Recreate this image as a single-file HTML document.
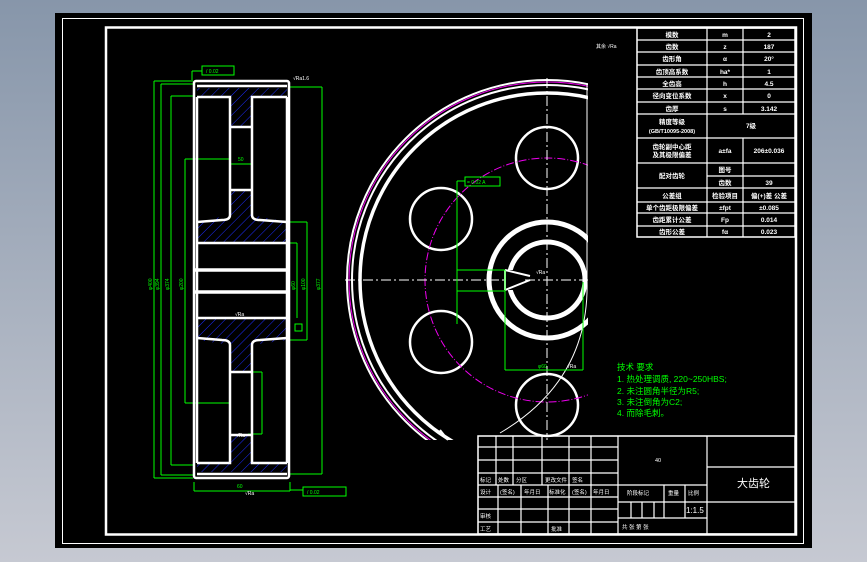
<!DOCTYPE html>
<html><head><meta charset="utf-8"><style>
html,body{margin:0;padding:0;width:867px;height:562px;overflow:hidden;background:linear-gradient(#8796aa,#c6c9d2);}
svg{position:absolute;left:0;top:0}
text{font-family:"Liberation Sans","Noto Sans CJK SC",sans-serif;}
</style></head><body>
<svg width="867" height="562" viewBox="0 0 867 562">
<defs>
<pattern id="h" width="7" height="7" patternUnits="userSpaceOnUse" patternTransform="rotate(45)">
<line x1="0" y1="0" x2="0" y2="7" stroke="#1d2cff" stroke-width="1"/></pattern>
<clipPath id="cv"><rect x="340" y="60" width="248" height="380"/></clipPath>
</defs>
<rect x="55" y="13" width="757" height="535" fill="#000"/>
<rect x="62.5" y="18.5" width="741" height="525" fill="none" stroke="#fff" stroke-width="1"/>
<rect x="106" y="27.5" width="690" height="507" fill="none" stroke="#fff" stroke-width="2.5"/>

<!-- section view -->
<g stroke="#0f0" stroke-width="1" fill="none">
<line x1="154" y1="81" x2="154" y2="478"/><line x1="154" y1="81" x2="193" y2="81"/><line x1="154" y1="478" x2="193" y2="478"/>
<line x1="161" y1="84" x2="161" y2="475"/><line x1="161" y1="84" x2="193" y2="84"/><line x1="161" y1="475" x2="193" y2="475"/>
<line x1="171" y1="96" x2="171" y2="465"/><line x1="171" y1="96" x2="193" y2="96"/><line x1="171" y1="465" x2="193" y2="465"/>
<line x1="185" y1="159" x2="185" y2="403"/><line x1="185" y1="159" x2="230" y2="159"/><line x1="185" y1="403" x2="230" y2="403"/>
<line x1="322" y1="87" x2="322" y2="474"/><line x1="290" y1="87" x2="322" y2="87"/><line x1="290" y1="474" x2="322" y2="474"/>
<line x1="307" y1="222" x2="307" y2="340"/><line x1="290" y1="222" x2="307" y2="222"/><line x1="290" y1="340" x2="307" y2="340"/>
<line x1="297" y1="243" x2="297" y2="318"/><line x1="290" y1="243" x2="297" y2="243"/>
<line x1="262" y1="372" x2="262" y2="434"/><line x1="248" y1="372" x2="262" y2="372"/><line x1="248" y1="434" x2="262" y2="434"/>
<line x1="194" y1="482" x2="194" y2="491"/><line x1="194" y1="491" x2="290" y2="491"/><line x1="290" y1="482" x2="290" y2="491"/>
<line x1="192" y1="71" x2="192" y2="80"/><line x1="192" y1="71" x2="202" y2="71"/>
<rect x="202" y="66" width="32" height="9"/><rect x="303" y="487" width="43" height="9"/>
<line x1="290" y1="490" x2="303" y2="490"/>
<rect x="295" y="324" width="7" height="7"/>
<line x1="230" y1="164" x2="253" y2="164"/>
</g>
<g fill="#0f0" font-size="5">
<text x="206" y="73">/ 0.02</text><text x="307" y="494">/ 0.02</text>
<text x="238" y="161">50</text><text x="237" y="488">60</text>
<text transform="translate(152,290) rotate(-90)">φ400</text>
<text transform="translate(159,290) rotate(-90)">φ394</text>
<text transform="translate(169,290) rotate(-90)">φ374</text>
<text transform="translate(183,290) rotate(-90)">φ200</text>
<text transform="translate(305,290) rotate(-90)">φ100</text>
<text transform="translate(320,290) rotate(-90)">φ377</text>
<text transform="translate(295,290) rotate(-90)">φ60</text>
</g>
<g fill="url(#h)" stroke="none">
<rect x="197" y="88" width="90" height="9"/>
<rect x="197" y="463" width="90" height="9"/>
<path d="M230 97 L252 97 L252 127 L230 127 Z"/>
<path d="M230 190 L252 190 L252 215 L287 222 L287 243 L197 243 L197 222 L230 215 Z"/>
<path d="M197 318 L287 318 L287 340 L252 345 L252 372 L230 372 L230 345 L197 340 Z"/>
<path d="M230 435 L252 435 L252 463 L230 463 Z"/>
</g>
<g stroke="#fff" stroke-width="2.5" fill="none">
<rect x="194" y="81" width="95" height="397" rx="2"/>
<line x1="197" y1="86" x2="287" y2="86"/><line x1="197" y1="474" x2="287" y2="474"/>
<path d="M197 97 L230 97 Q230 103 230 110 L230 215 Q230 220 222 220 L197 222"/>
<path d="M287 97 L252 97 L252 215 Q252 220 260 220 L287 222"/>
<path d="M197 463 L230 463 L230 345 Q230 340 222 340 L197 338"/>
<path d="M287 463 L252 463 L252 345 Q252 340 260 340 L287 338"/>
<line x1="231" y1="127" x2="251" y2="127"/><line x1="231" y1="190" x2="251" y2="190"/>
<line x1="231" y1="372" x2="251" y2="372"/><line x1="231" y1="435" x2="251" y2="435"/>
<line x1="197" y1="243" x2="287" y2="243"/><line x1="197" y1="318" x2="287" y2="318"/>
<line x1="195" y1="270" x2="288" y2="270" stroke-width="3.5"/><line x1="195" y1="292" x2="288" y2="292" stroke-width="3.5"/>
<line x1="197" y1="97" x2="197" y2="463"/><line x1="287" y1="97" x2="287" y2="463"/>
</g>
<g fill="#fff" font-size="5"><text x="293" y="80">√Ra1.6</text><text x="235" y="316">√Ra</text><text x="245" y="495">√Ra</text><text x="236" y="437">√Ra</text></g>

<!-- circle view -->
<g clip-path="url(#cv)">
<g fill="none" stroke="#fff">
<circle cx="547" cy="280" r="200" stroke-width="2"/>
<circle cx="547" cy="280" r="195" stroke-width="2"/>
<circle cx="547" cy="280" r="187" stroke-width="3.5"/>
<circle cx="547" cy="158" r="31" stroke-width="2.5"/>
<circle cx="441" cy="219" r="31" stroke-width="2.5"/>
<circle cx="441" cy="342" r="31" stroke-width="2.5"/>
<circle cx="547" cy="405" r="31" stroke-width="2.5"/>
<circle cx="547" cy="280" r="58" stroke-width="5"/>
<circle cx="547" cy="280" r="38" stroke-width="5"/>
</g>
<circle cx="547" cy="280" r="198" fill="none" stroke="#e0e" stroke-width="1"/>
<circle cx="547" cy="280" r="122" fill="none" stroke="#e0e" stroke-width="1" stroke-dasharray="8 2 1 2"/>
<g stroke="#fff" stroke-width="1" stroke-dasharray="10 3 2 3"><line x1="345" y1="280" x2="590" y2="280"/><line x1="547" y1="78" x2="547" y2="440"/></g>
<line x1="587" y1="83" x2="587" y2="280" stroke="#fff" stroke-width="1"/>
<path d="M587 280 Q590 380 500 433" fill="none" stroke="#fff" stroke-width="1"/>
<rect x="505" y="270" width="20" height="20" fill="#000"/>
<path d="M505 270 L530 276 M505 290 L530 280 M505 270 L505 290" stroke="#fff" stroke-width="2" fill="none"/>
</g>
<path d="M440 430 L448 440" stroke="#fff" stroke-width="2"/>
<g stroke="#0f0" fill="none" stroke-width="1">
<line x1="457" y1="181" x2="457" y2="324"/><line x1="457" y1="181" x2="465" y2="181"/>
<rect x="465" y="177" width="35" height="9"/>
<line x1="457" y1="270" x2="505" y2="270"/><line x1="457" y1="291" x2="505" y2="291"/>
<line x1="505" y1="270" x2="505" y2="370"/><line x1="505" y1="370" x2="583" y2="370"/><line x1="583" y1="282" x2="583" y2="370"/>
</g>
<g fill="#0f0" font-size="5"><text x="467" y="184">= 0.02 A</text><text x="538" y="368">φ60</text></g>
<g fill="#fff" font-size="5"><text x="536" y="274">√Ra</text><text x="567" y="368">√Ra</text><text x="596" y="48">其余 √Ra</text></g>

<!-- technical requirements -->
<g fill="#0f0" font-size="8.5">
<text x="617" y="370">技术 要求</text>
<text x="617" y="382">1. 热处理调质, 220~250HBS;</text>
<text x="617" y="394">2. 未注圆角半径为R5;</text>
<text x="617" y="405">3. 未注倒角为C2;</text>
<text x="617" y="416">4. 而除毛刺。</text>
</g>

<!-- parameter table -->
<g stroke="#fff" stroke-width="1.2" fill="none">
<rect x="637" y="28" width="158" height="209" stroke-width="1.5"/>
<line x1="707" y1="28" x2="707" y2="237"/><line x1="743" y1="28" x2="743" y2="114"/><line x1="743" y1="138" x2="743" y2="237"/>
<path d="M637 40H795M637 52H795M637 65H795M637 77H795M637 89H795M637 102H795M637 114H795M637 138H795M637 163H795M707 176H795M637 188H795M637 202H795M637 213H795M637 226H795"/>
</g>
<g fill="#fff" font-size="6.5" text-anchor="middle" font-weight="bold">
<text x="672" y="37">模数</text><text x="725" y="37">m</text><text x="769" y="37">2</text>
<text x="672" y="49">齿数</text><text x="725" y="49">z</text><text x="769" y="49">187</text>
<text x="672" y="61">齿形角</text><text x="725" y="61">α</text><text x="769" y="61">20°</text>
<text x="672" y="74">齿顶高系数</text><text x="725" y="74">ha*</text><text x="769" y="74">1</text>
<text x="672" y="86">全齿高</text><text x="725" y="86">h</text><text x="769" y="86">4.5</text>
<text x="672" y="98">径向变位系数</text><text x="725" y="98">x</text><text x="769" y="98">0</text>
<text x="672" y="111">齿厚</text><text x="725" y="111">s</text><text x="769" y="111">3.142</text>
<text x="672" y="124">精度等级</text><text x="672" y="133" font-size="5.5">(GB/T10095-2008)</text><text x="751" y="128">7级</text>
<text x="672" y="149">齿轮副中心距</text><text x="672" y="157">及其极限偏差</text><text x="725" y="153">a±fa</text><text x="769" y="153">206±0.036</text>
<text x="672" y="178">配对齿轮</text><text x="725" y="172">图号</text><text x="725" y="185">齿数</text><text x="769" y="185">39</text>
<text x="672" y="198">公差组</text><text x="725" y="198">检验项目</text><text x="769" y="198">偏(+)差 公差</text>
<text x="672" y="210">单个齿距极限偏差</text><text x="725" y="210">±fpt</text><text x="769" y="210">±0.085</text>
<text x="672" y="222">齿距累计公差</text><text x="725" y="222">Fp</text><text x="769" y="222">0.014</text>
<text x="672" y="234">齿形公差</text><text x="725" y="234">fα</text><text x="769" y="234">0.023</text>
</g>

<!-- title block -->
<g stroke="#fff" stroke-width="1.2" fill="none">
<rect x="478" y="436" width="317" height="98" stroke-width="1.5"/>
<path d="M478 447H618M478 460H618M478 473H618M478 485H707M478 497H618M478 509H618M478 522H618M618 502H707M618 518H707M707 467H795M707 502H795"/>
<path d="M496 436V485M513 436V485M542 436V485M569 436V534M591 436V534M618 436V534M707 436V534"/>
<path d="M498 485V534M521 485V534M548 485V534"/>
<path d="M664 485V518M685 485V518M631 502V518M642 502V518M654 502V518"/>
</g>
<g fill="#fff" font-size="5.5">
<text x="480" y="482">标记</text><text x="498" y="482">处数</text><text x="516" y="482">分区</text><text x="545" y="482">更改文件</text><text x="572" y="482">签名</text>
<text x="480" y="494">设计</text><text x="500" y="494">(签名)</text><text x="524" y="494">年月日</text><text x="549" y="494">标准化</text><text x="572" y="494">(签名)</text><text x="593" y="494">年月日</text>
<text x="627" y="495">阶段标记</text><text x="668" y="495">重量</text><text x="688" y="495">比例</text>
<text x="480" y="518">审核</text><text x="480" y="531">工艺</text><text x="551" y="531">批准</text>
<text x="622" y="529">共   张      第   张</text>
<text x="655" y="462">40</text>
<text x="686" y="513" font-size="8">1:1.5</text>
<text x="737" y="487" font-size="11">大齿轮</text>
</g>
</svg>
</body></html>
